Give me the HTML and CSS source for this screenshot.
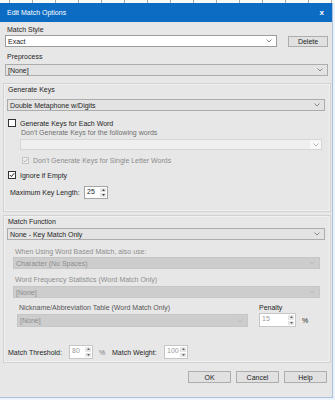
FILE: index.html
```html
<!DOCTYPE html>
<html>
<head>
  <title>Edit Match Options</title>
  <link rel="stylesheet" href="styles.css">
</head>
<body>
  <div class="backdrop"></div>
  <div class="window">
    <div class="titlebar">
      <span>Edit Match Options</span>
      <span class="close">x</span>
    </div>
    <div class="content">
      <div class="label top-label">Match Style</div>
      <div class="style-row">
        <div class="combo white exact">Exact<svg class="chev" width="6" height="4" viewBox="0 0 6 4"><path d="M0.5 0.5L3 3L5.5 0.5" fill="none" stroke="#8a8a8a"/></svg></div>
        <div class="button delete">Delete</div>
      </div>
      <div class="label top-label preprocess-label">Preprocess</div>
      <div class="combo preprocess">[None]<svg class="chev" width="6" height="4" viewBox="0 0 6 4"><path d="M0.5 0.5L3 3L5.5 0.5" fill="none" stroke="#8a8a8a"/></svg></div>

      <div class="frame keys-frame">
        <div class="label frame-label">Generate Keys</div>
        <div class="combo frame-combo">Double Metaphone w/Digits<svg class="chev" width="6" height="4" viewBox="0 0 6 4"><path d="M0.5 0.5L3 3L5.5 0.5" fill="none" stroke="#8a8a8a"/></svg></div>
        <div class="check-row each-word">
          <span class="checkbox"></span>
          <span>Generate Keys for Each Word</span>
        </div>
        <div class="label hint">Don't Generate Keys for the following words</div>
        <div class="combo light words-combo"><span></span><span class="chev-box"><svg class="chev" width="6" height="4" viewBox="0 0 6 4"><path d="M0.5 0.5L3 3L5.5 0.5" fill="none" stroke="#b5b5b5"/></svg></span></div>
        <div class="check-row single-letter">
          <span class="checkbox small disabled"><svg width="5" height="5" viewBox="0 0 5 5"><path d="M0.6 2.5L2 3.9L4.4 1" fill="none" stroke="#b0b0b0"/></svg></span>
          <span>Don't Generate Keys for Single Letter Words</span>
        </div>
        <div class="check-row ignore">
          <span class="checkbox"><svg width="6" height="6" viewBox="0 0 6 6"><path d="M0.8 3L2.4 4.6L5.2 1.2" fill="none" stroke="#222"/></svg></span>
          <span>Ignore if Empty</span>
        </div>
        <div class="field-row max-key">
          <span class="max-key-label">Maximum Key Length:</span>
          <div class="spin key-spin">
            <span class="spin-value">25</span>
            <span class="arrows">
              <span><svg width="3" height="2" viewBox="0 0 3 2"><path d="M0 2L1.5 0L3 2Z" fill="#444"/></svg></span>
              <span><svg width="3" height="2" viewBox="0 0 3 2"><path d="M0 0L1.5 2L3 0Z" fill="#444"/></svg></span>
            </span>
          </div>
        </div>
      </div>

      <div class="frame function-frame">
        <div class="label frame-label">Match Function</div>
        <div class="combo frame-combo function-combo">None - Key Match Only<svg class="chev" width="6" height="4" viewBox="0 0 6 4"><path d="M0.5 0.5L3 3L5.5 0.5" fill="none" stroke="#8a8a8a"/></svg></div>
        <div class="label hint word-hint">When Using Word Based Match, also use:</div>
        <div class="combo dim wide-dim">Character (No Spaces)<svg class="chev" width="6" height="4" viewBox="0 0 6 4"><path d="M0.5 0.5L3 3L5.5 0.5" fill="none" stroke="#b8b8b8"/></svg></div>
        <div class="label hint word-hint freq-hint">Word Frequency Statistics (Word Match Only)</div>
        <div class="combo dim wide-dim freq-combo">[None]<svg class="chev" width="6" height="4" viewBox="0 0 6 4"><path d="M0.5 0.5L3 3L5.5 0.5" fill="none" stroke="#b8b8b8"/></svg></div>
        <div class="nick-row">
          <div class="nick-col">
            <div class="label nick-label">Nickname/Abbreviation Table (Word Match Only)</div>
            <div class="combo dim nick-combo">[None]<svg class="chev" width="6" height="4" viewBox="0 0 6 4"><path d="M0.5 0.5L3 3L5.5 0.5" fill="none" stroke="#b8b8b8"/></svg></div>
          </div>
          <div class="penalty-col">
            <div class="label">Penalty</div>
            <div class="field-row">
              <div class="spin dim-spin penalty-spin">
                <span class="spin-value">15</span>
                <span class="arrows">
                  <span><svg width="3" height="2" viewBox="0 0 3 2"><path d="M0 2L1.5 0L3 2Z" fill="#666"/></svg></span>
                  <span><svg width="3" height="2" viewBox="0 0 3 2"><path d="M0 0L1.5 2L3 0Z" fill="#666"/></svg></span>
                </span>
              </div>
              <span class="percent">%</span>
            </div>
          </div>
        </div>
        <div class="field-row threshold-row">
          <span class="threshold-label">Match Threshold:</span>
          <div class="spin dim-spin small-spin">
            <span class="spin-value">80</span>
            <span class="arrows">
              <span><svg width="3" height="2" viewBox="0 0 3 2"><path d="M0 2L1.5 0L3 2Z" fill="#666"/></svg></span>
              <span><svg width="3" height="2" viewBox="0 0 3 2"><path d="M0 0L1.5 2L3 0Z" fill="#666"/></svg></span>
            </span>
          </div>
          <span class="threshold-percent">%</span>
          <span class="weight-label">Match Weight:</span>
          <div class="spin dim-spin small-spin">
            <span class="spin-value">100</span>
            <span class="arrows">
              <span><svg width="3" height="2" viewBox="0 0 3 2"><path d="M0 2L1.5 0L3 2Z" fill="#666"/></svg></span>
              <span><svg width="3" height="2" viewBox="0 0 3 2"><path d="M0 0L1.5 2L3 0Z" fill="#666"/></svg></span>
            </span>
          </div>
        </div>
      </div>

      <div class="button-row">
        <div class="button">OK</div>
        <div class="button">Cancel</div>
        <div class="button">Help</div>
      </div>
    </div>
  </div>
</body>
</html>
```

FILE: styles.css
```css
body {
  margin: 0;
  background-color: #eef3f9;
  font-family: "Liberation Sans", Arial, sans-serif;
  font-size: 7px;
  color: #1e1e1e;
}
.backdrop {
  height: 3px;
  background: repeating-linear-gradient(90deg, #fafafa 0 9px, #a9a9a9 9px 10px, #fafafa 10px 23px);
}
.window {
  width: 332px;
  height: 394px;
  background-color: #e7e7e7;
  border-right: 1px solid #a8c2e0;
  border-bottom: 1px solid #a8c2e0;
  display: flex;
  flex-direction: column;
}
.titlebar {
  height: 19px;
  flex-shrink: 0;
  background-color: #0c6cc3;
  color: white;
  display: flex;
  align-items: center;
  justify-content: space-between;
  padding: 0 8px 0 7px;
}
.close {
  font-size: 8px;
  font-weight: bold;
}
.content {
  padding: 3px 0 0 3px;
}
.label {
  height: 10px;
  line-height: 10px;
  white-space: nowrap;
}
.top-label {
  padding-left: 4px;
}
.preprocess-label {
  margin-top: 5px;
}
.style-row {
  display: flex;
  align-items: center;
  margin-left: 2px;
  height: 12px;
}
.combo {
  box-sizing: border-box;
  height: 12px;
  display: flex;
  align-items: center;
  justify-content: space-between;
  padding: 0 4px 0 2px;
  background-color: #e3e3e3;
  border: 1px solid #acacac;
  white-space: nowrap;
}
.combo.white {
  background-color: white;
  border-color: #9c9c9c;
}
.exact {
  width: 272px;
}
.button {
  box-sizing: border-box;
  height: 12px;
  width: 43px;
  display: flex;
  align-items: center;
  justify-content: center;
  background-color: #e1e1e1;
  border: 1px solid #adadad;
}
.delete {
  width: 40px;
  height: 11px;
  margin-left: 11px;
}
.preprocess {
  margin: 2px 0 0 2px;
  width: 323px;
}
.frame {
  box-sizing: border-box;
  width: 328px;
  border: 1px solid #d2d2d2;
  box-shadow: inset 0 0 0 1px #f1f1f1;
  padding: 1px 5px 12px 3px;
}
.keys-frame {
  margin-top: 7px;
}
.function-frame {
  margin-top: 3px;
  padding-bottom: 3px;
}
.frame-label {
  padding-left: 1px;
}
.frame-combo {
  margin-top: 4px;
  width: 318px;
}
.function-combo {
  margin-top: 1px;
}
.check-row {
  display: flex;
  align-items: center;
  height: 10px;
  white-space: nowrap;
}
.checkbox {
  box-sizing: border-box;
  width: 8px;
  height: 8px;
  margin: 0 4px 0 1px;
  background-color: white;
  border: 1px solid #333;
  display: flex;
  align-items: center;
  justify-content: center;
}
.checkbox.small {
  width: 7px;
  height: 7px;
}
.checkbox.disabled {
  background-color: #efefef;
  border-color: #c4c4c4;
}
.each-word {
  margin-top: 7px;
}
.hint {
  color: #6f6f6f;
  padding-left: 14px;
}
.words-combo {
  margin: 1px 0 0 13px;
  width: 302px;
  height: 11px;
  padding: 0;
}
.combo.light {
  background-color: #efefef;
  border-color: #d6d6d6;
}
.chev-box {
  width: 11px;
  height: 9px;
  background-color: #f8f8f8;
  display: flex;
  align-items: center;
  justify-content: center;
}
.single-letter {
  margin: 5px 0 0 14px;
  color: #8c8c8c;
}
.ignore {
  margin-top: 5px;
}
.field-row {
  display: flex;
  align-items: center;
  white-space: nowrap;
}
.max-key {
  margin-top: 6px;
}
.max-key-label {
  width: 77px;
  padding-left: 3px;
  box-sizing: border-box;
}
.spin {
  box-sizing: border-box;
  width: 24px;
  height: 13px;
  display: flex;
  justify-content: space-between;
  background-color: white;
  border: 1px solid #a4a4a4;
  padding: 1px 1px 1px 2px;
}
.spin-value {
  line-height: 8px;
}
.arrows {
  width: 6px;
  display: flex;
  flex-direction: column;
  gap: 1px;
}
.arrows span {
  flex: 1;
  background-color: #e6e6e6;
  display: flex;
  align-items: center;
  justify-content: center;
}
.key-spin {
  width: 24px;
}
.dim-spin {
  border-color: #c6c6c6;
  color: #9a9a9a;
}
.word-hint {
  margin-top: 7px;
  padding-left: 8px;
  color: #8e8e8e;
}
.freq-hint {
  margin-top: 6px;
}
.combo.dim {
  background-color: #cdcdcd;
  border-color: #c6c6c6;
  color: #8d8d8d;
}
.wide-dim {
  margin-left: 6px;
  width: 307px;
}
.freq-combo {
  margin-top: 1px;
}
.nick-row {
  display: flex;
  align-items: flex-start;
  margin-top: 3px;
}
.nick-col {
  margin-left: 10px;
  width: 231px;
  padding-top: 2px;
}
.nick-label {
  padding-left: 2px;
  color: #555;
}
.nick-combo {
  margin-top: 1px;
  height: 13px;
}
.penalty-col {
  margin-left: 11px;
  padding-top: 2px;
}
.penalty-spin {
  width: 37px;
  height: 14px;
}
.percent {
  margin-left: 6px;
}
.threshold-row {
  margin-top: 18px;
}
.threshold-label {
  width: 62px;
  padding-left: 1px;
  box-sizing: border-box;
}
.small-spin {
  height: 14px;
}
.threshold-percent {
  width: 19px;
  flex-shrink: 0;
  padding-left: 6px;
  box-sizing: border-box;
  color: #777;
}
.weight-label {
  width: 52px;
  flex-shrink: 0;
}
.button-row {
  display: flex;
  justify-content: flex-end;
  gap: 5px;
  margin-top: 8px;
  padding-right: 5px;
}
```
